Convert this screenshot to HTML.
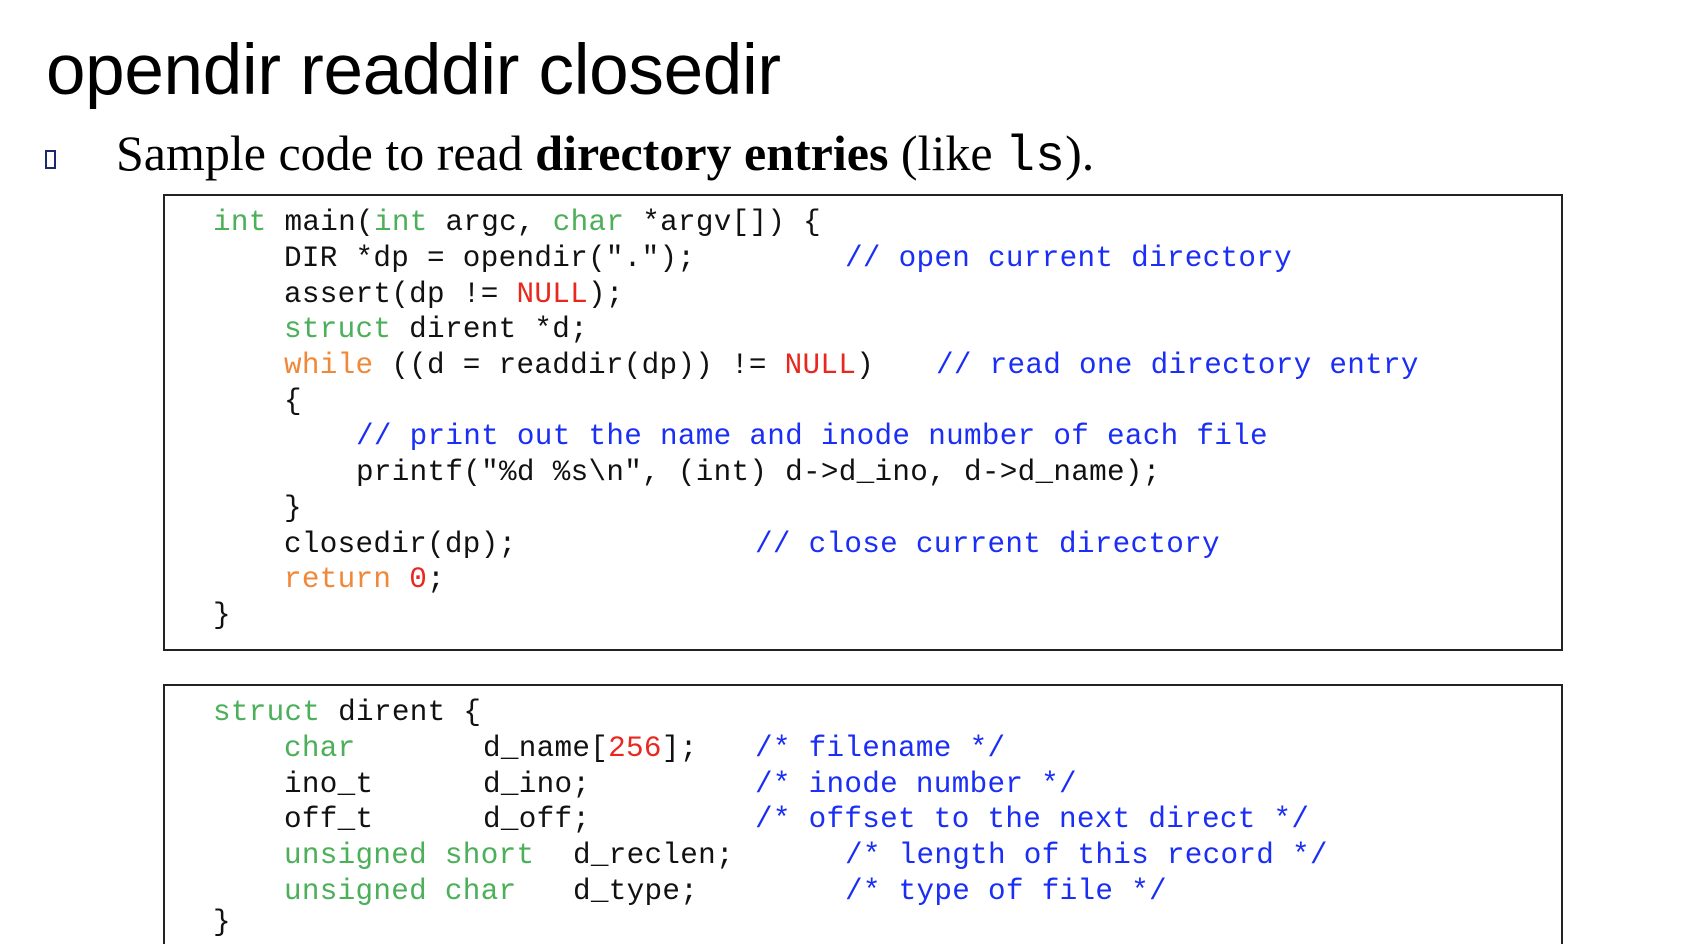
<!DOCTYPE html>
<html><head><meta charset="utf-8"><style>
html,body{margin:0;padding:0;overflow:hidden;background:#fff}
#w{width:1684px;height:944px;background:#fff;overflow:hidden;position:relative;font-family:"Liberation Sans",sans-serif}
.t{position:absolute;left:46px;top:30px;font-size:71px;color:#000;letter-spacing:-0.3px;white-space:nowrap}
.b{position:absolute;left:116px;top:124px;font-family:"Liberation Serif",serif;font-size:50px;white-space:nowrap}
.bul{position:absolute;left:45px;top:150px;width:11px;height:19px;border:2px solid #1a2a6c;box-sizing:border-box}
.box{position:absolute;left:163px;width:1409px;border:2px solid #222;box-sizing:border-box}
.c{position:absolute;font-family:"Liberation Mono",monospace;font-size:29.3px;letter-spacing:0.3px;line-height:36px;white-space:pre;color:#111}
.g{color:#4caf5a}.o{color:#f0883a}.r{color:#e8281e}.u{color:#1a2ef5}
</style></head><body><div id="w">
<div class="t">opendir readdir closedir</div>
<div class="bul"></div>
<div class="b">Sample code to read <b>directory entries</b> (like <span style="font-family:'Liberation Mono',monospace">ls</span>).</div>
<div class="box" style="top:194px;height:457px;width:1400px"></div>
<div class="box" style="top:684px;height:260px;width:1400px;border-bottom:none"></div>

<div class="c" style="left:213px;top:205px"><span class="g">int</span> main(<span class="g">int</span> argc, <span class="g">char</span> *argv[]) {</div>
<div class="c" style="left:284px;top:241px">DIR *dp = opendir(".");</div>
<div class="c u" style="left:845px;top:241px">// open current directory</div>
<div class="c" style="left:284px;top:277px">assert(dp != <span class="r">NULL</span>);</div>
<div class="c" style="left:284px;top:312px"><span class="g">struct</span> dirent *d;</div>
<div class="c" style="left:284px;top:348px"><span class="o">while</span> ((d = readdir(dp)) != <span class="r">NULL</span>)</div>
<div class="c u" style="left:936px;top:348px">// read one directory entry</div>
<div class="c" style="left:284px;top:384px">{</div>
<div class="c u" style="left:356px;top:419px">// print out the name and inode number of each file</div>
<div class="c" style="left:356px;top:455px">printf("%d %s\n", (int) d-&gt;d_ino, d-&gt;d_name);</div>
<div class="c" style="left:284px;top:491px">}</div>
<div class="c" style="left:284px;top:527px">closedir(dp);</div>
<div class="c u" style="left:755px;top:527px">// close current directory</div>
<div class="c" style="left:284px;top:562px"><span class="o">return</span> <span class="r">0</span>;</div>
<div class="c" style="left:213px;top:598px">}</div>

<div class="c" style="left:213px;top:695px"><span class="g">struct</span> dirent {</div>
<div class="c g" style="left:284px;top:731px">char</div>
<div class="c" style="left:483px;top:731px">d_name[<span class="r">256</span>];</div>
<div class="c u" style="left:755px;top:731px">/* filename */</div>
<div class="c" style="left:284px;top:767px">ino_t</div>
<div class="c" style="left:483px;top:767px">d_ino;</div>
<div class="c u" style="left:755px;top:767px">/* inode number */</div>
<div class="c" style="left:284px;top:802px">off_t</div>
<div class="c" style="left:483px;top:802px">d_off;</div>
<div class="c u" style="left:755px;top:802px">/* offset to the next direct */</div>
<div class="c g" style="left:284px;top:838px">unsigned short</div>
<div class="c" style="left:573px;top:838px">d_reclen;</div>
<div class="c u" style="left:845px;top:838px">/* length of this record */</div>
<div class="c g" style="left:284px;top:874px">unsigned char</div>
<div class="c" style="left:573px;top:874px">d_type;</div>
<div class="c u" style="left:845px;top:874px">/* type of file */</div>
<div class="c" style="left:213px;top:905px">}</div>
</div></body></html>
